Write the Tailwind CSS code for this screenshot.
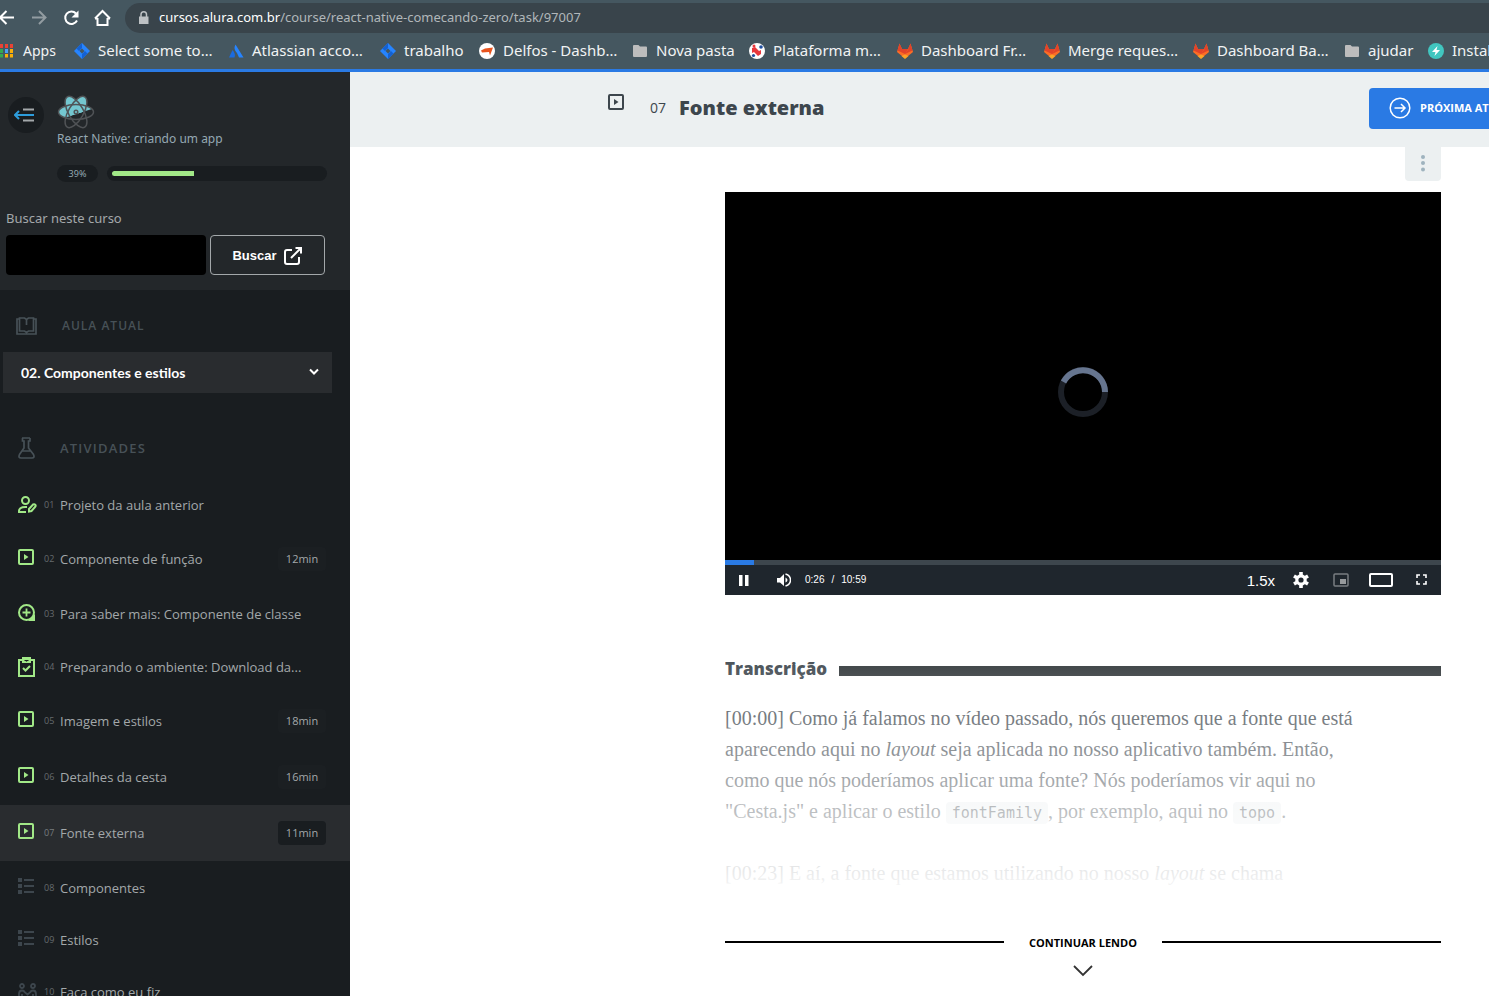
<!DOCTYPE html>
<html lang="pt-BR">
<head>
<meta charset="utf-8">
<title>Fonte externa</title>
<script src="https://cdn.jsdelivr.net/npm/@tailwindcss/browser@4"></script>
</head>
<body class="flex h-screen flex-col overflow-hidden bg-white font-['Open_Sans','Noto_Sans',sans-serif]">
<svg class="hidden">
  <symbol id="play" viewBox="0 0 16 16"><rect x="1" y="1" width="14" height="14" rx="1" fill="none" stroke="currentColor" stroke-width="2"/><path d="M6 5l4.500 3L6 11z" fill="currentColor"/></symbol>
  <symbol id="list" viewBox="0 0 16 16"><path d="M0 0h4v4H0zM0 6h4v4H0zM0 12h4v4H0zM6 1h10v2H6zM6 7h10v2H6zM6 13h10v2H6z" fill="currentColor"/></symbol>
  <symbol id="jira" viewBox="0 0 16 16"><path d="M8 0l8 8-8 8-8-8z" fill="#2684ff"/><path d="M8 0v5L5 8 2.500 5.500zM8 16v-5l3-3 2.500 2.500z" fill="#1461d2"/><path d="M8 5.500L10.500 8 8 10.500 5.500 8z" fill="#455760"/></symbol>
  <symbol id="gitlab" viewBox="0 0 16 16"><path d="M8 15.500L0 9l2.500-8.500L5 6h6l2.500-5.500L16 9z" fill="#fc6d26"/><path d="M2.500.5L5 6l3 5-7.500-3.500zM13.500.5L11 6l-3 5 7.500-3.500zM4.500 6h7L8 11z" fill="#e24329"/><path d="M8 16L4.500 13 8 11.500l3.500 1.500z" fill="#fca326"/></symbol>
  <symbol id="folder" viewBox="0 0 16 16"><path d="M2 2h4.500L8 3.500h6a1 1 0 011 1V13a1 1 0 01-1 1H2a1 1 0 01-1-1V3a1 1 0 011-1z" fill="#bdbdbd"/></symbol>
</svg>

<header class="shrink-0 border-b-[3px] border-[#2a7ae4] bg-[#455760] font-['Noto_Sans',sans-serif] text-[#f1f3f4]">
  <nav class="flex h-9 items-center" aria-label="Navegação">
    <button class="w-8 shrink-0" aria-label="Voltar"><svg class="-ml-1 size-5" viewBox="0 0 20 20" fill="none" stroke="#fff" stroke-width="2"><path d="M18 9.500H4M10.500 3L4 9.500l6.500 6.500"/></svg></button>
    <button class="w-[33px] shrink-0" aria-label="Avançar"><svg class="-ml-1 size-5" viewBox="0 0 20 20" fill="none" stroke="#929ca1" stroke-width="2"><path d="M4 9.500h13M11 3l6.500 6.500-6.500 6.500"/></svg></button>
    <button class="w-[31px] shrink-0" aria-label="Recarregar"><svg class="-ml-1 size-5" viewBox="0 0 20 20" fill="none" stroke="#fff" stroke-width="2"><path d="M16 12.500A6.200 6.200 0 1 1 15 5.500"/><path d="M17.500 2.500v7h-7z" fill="#fff" stroke="none"/></svg></button>
    <button class="w-[29px] shrink-0" aria-label="Início"><svg class="-ml-1 size-5" viewBox="0 0 20 20" fill="none" stroke="#fff" stroke-width="2"><path d="M5.500 10v7h10v-7M3 10.500h2.500M15.500 10.500H18M3 10.500L10.500 3 18 10.500"/></svg></button>
    <div class="flex h-[30px] flex-1 items-center gap-2 rounded-l-full bg-[#39444b] pl-3">
      <svg class="size-3.5" viewBox="0 0 14 14"><path d="M2 5.500h9.500V13H2z" fill="#bdc1c4"/><path d="M4 6V3.500a2.750 2.750 0 015.500 0V6" fill="none" stroke="#bdc1c4" stroke-width="1.500"/></svg>
      <span class="text-[13px] whitespace-nowrap text-[#b1b7ba]"><span class="text-white">cursos.alura.com.br</span>/course/react-native-comecando-zero/task/97007</span>
    </div>
  </nav>
  <nav class="flex h-[33px] items-center overflow-hidden pb-1 text-[15px] whitespace-nowrap" aria-label="Favoritos">
    <a href="#" class="flex w-[74px] shrink-0 items-center gap-[9px]"><svg class="h-4 w-3.5" viewBox="0 0 14 16"><path d="M-1 1h4v4h-4zM5 1h3v4H5zM10 1h3v4h-3z" fill="#ea4335"/><path d="M-1 6h4v4h-4zM-1 11h4v3.500h-4z" fill="#34a853"/><path d="M5 6h3v4H5z" fill="#4aa0f5"/><path d="M10 6h3v4h-3zM5 11h3v3.500H5zM10 11h3v3.500h-3z" fill="#fbaf07"/></svg><span class="text-sm">Apps</span></a>
    <a href="#" class="flex w-[154px] shrink-0 items-center gap-2"><svg class="size-4"><use href="#jira"/></svg>Select some to…</a>
    <a href="#" class="flex w-[152px] shrink-0 items-center gap-2"><svg class="size-4" viewBox="0 0 16 16"><path d="M7.500 1.500Q5 6 9 10l2 4.500h4.500z" fill="#2684ff"/><path d="M4.500 7L1 14.500h5.500Q8 11 4.500 7z" fill="#1b6be0"/></svg>Atlassian acco…</a>
    <a href="#" class="flex w-[99px] shrink-0 items-center gap-2"><svg class="size-4"><use href="#jira"/></svg>trabalho</a>
    <a href="#" class="flex w-[153px] shrink-0 items-center gap-2"><svg class="size-4" viewBox="0 0 16 16"><circle cx="8" cy="8" r="8" fill="#fff"/><path d="M2 7.500l4-2 8-1-3 8L10 9l-7 .5z" fill="#e8541f"/></svg>Delfos - Dashb…</a>
    <a href="#" class="flex w-[117px] shrink-0 items-center gap-2"><svg class="size-4"><use href="#folder"/></svg>Nova pasta</a>
    <a href="#" class="flex w-[148px] shrink-0 items-center gap-2"><svg class="size-4" viewBox="0 0 16 16"><circle cx="8" cy="8" r="8" fill="#fff"/><path d="M3 5l3-1 4 4 2-1v4l-3 2-4-4-2 1z" fill="#e8383d"/><circle cx="5" cy="3" r="1.500" fill="#e8383d"/><circle cx="12" cy="4" r="1.800" fill="#1f4fa0"/><circle cx="4.500" cy="12.500" r="1.600" fill="#1f4fa0"/></svg>Plataforma m…</a>
    <a href="#" class="flex w-[147px] shrink-0 items-center gap-2"><svg class="size-4"><use href="#gitlab"/></svg>Dashboard Fr…</a>
    <a href="#" class="flex w-[149px] shrink-0 items-center gap-2"><svg class="size-4"><use href="#gitlab"/></svg>Merge reques…</a>
    <a href="#" class="flex w-[151px] shrink-0 items-center gap-2"><svg class="size-4"><use href="#gitlab"/></svg>Dashboard Ba…</a>
    <a href="#" class="flex w-[84px] shrink-0 items-center gap-2"><svg class="size-4"><use href="#folder"/></svg>ajudar</a>
    <a href="#" class="flex shrink-0 items-center gap-2"><svg class="size-4" viewBox="0 0 16 16"><circle cx="8" cy="8" r="8" fill="#41c6c0"/><path d="M9.500 3L4 9h3.500L6.500 13 12 7H8.500z" fill="#fff"/></svg>Instal</a>
  </nav>
</header>

<div class="flex min-h-0 flex-1">
  <aside class="w-[350px] shrink-0 overflow-hidden bg-[#191d20] text-[#a3a8aa]">
    <section class="h-[218px] bg-[#23272a] pt-[23px] pl-1.5">
      <div class="flex items-start">
        <button class="mt-0.5 ml-0.5 flex size-9 items-center justify-center rounded-full bg-[#191d20] pr-1" aria-label="Recolher menu"><svg class="h-4 w-5" viewBox="0 0 20 16" fill="none"><path d="M9 2.500h11M9 13.500h11" stroke="#a3a8aa" stroke-width="2"/><path d="M1 8h19M5 4L1 8l4 4" stroke="#2d9cdb" stroke-width="2"/></svg></button>
        <div class="ml-[13px] font-['Noto_Sans',sans-serif]">
          <svg class="h-[34px] w-[38px]" viewBox="0 0 38 34"><defs><clipPath id="lit"><path d="M0 0h38v13L0 25z"/></clipPath></defs>
            <g clip-path="url(#lit)" fill="#74c7d0"><ellipse cx="19" cy="17" rx="17.500" ry="7.500"/><ellipse cx="19" cy="17" rx="17.500" ry="7.500" transform="rotate(60 19 17)"/><ellipse cx="19" cy="17" rx="17.500" ry="7.500" transform="rotate(120 19 17)"/></g>
            <g fill="none" stroke="#505356" stroke-width="1.500"><ellipse cx="19" cy="17" rx="17.500" ry="7.500"/><ellipse cx="19" cy="17" rx="17.500" ry="7.500" transform="rotate(60 19 17)"/><ellipse cx="19" cy="17" rx="17.500" ry="7.500" transform="rotate(120 19 17)"/><circle cx="19" cy="17" r="1.800"/></g></svg>
          <p class="text-xs leading-5 text-[#95a9b3]">React Native: criando um app</p>
        </div>
      </div>
      <div class="mt-4 ml-[51px] flex items-center gap-[9px]">
        <span class="flex h-[17px] w-[41px] items-center justify-center rounded-full bg-[#191d20] font-['Noto_Sans',sans-serif] text-[9px] text-[#95a9b3]">39%</span>
        <div class="flex h-[15px] w-[220px] items-center rounded-full bg-[#191d20] px-[5px]" role="progressbar" aria-label="Progresso" aria-valuenow="39" aria-valuemin="0" aria-valuemax="100"><div class="h-[5px] rounded-l-full bg-[#a1e887]" style="width:39%"></div></div>
      </div>
      <form class="mt-[26px]" onsubmit="return false">
        <label for="q" class="block font-['Noto_Sans',sans-serif] text-[13px] leading-5">Buscar neste curso</label>
        <div class="mt-[7px] flex gap-1">
          <input id="q" type="text" class="h-10 w-[200px] rounded bg-black px-2 text-white">
          <button class="flex h-10 w-[115px] items-center justify-center gap-1.5 rounded border border-[#a3a8aa] pt-0.5 font-['Liberation_Sans',sans-serif] text-[13px] font-bold text-white">Buscar<svg class="size-5" viewBox="0 0 20 20" fill="none" stroke="#fff" stroke-width="2"><path d="M9 4H4Q2 4 2 6v10q0 2 2 2h10q2 0 2-2v-5M8 12L18 2M12.500 2H18v5.500"/></svg></button>
        </div>
      </form>
    </section>

    <h2 class="mt-[26px] flex items-center gap-[25px] pl-4 text-xs leading-5 tracking-[1px] text-[#475157]"><svg class="h-[18px] w-[21px]" viewBox="0 0 21 18" fill="none" stroke="#475157" stroke-width="1.700"><path d="M3 2H1v15h19V2h-2M3.500 1v13h5l2 1.500 2-1.500h5V1h-5l-2 1.500L8.500 1zM10.500 2.500V8"/></svg><span class="font-semibold">AULA ATUAL</span></h2>
    <div class="relative mt-4 ml-[3px] w-[329px] bg-[#292c2f]">
      <select aria-label="Aula atual" class="h-[41px] w-full appearance-none bg-transparent pl-[18px] font-['Lato',sans-serif] text-sm font-bold text-white"><option>02. Componentes e estilos</option></select>
      <svg class="pointer-events-none absolute top-4 right-[13px] h-2 w-2.5" viewBox="0 0 10 8"><path d="M1 1.500l4 4 4-4" fill="none" stroke="#fff" stroke-width="2"/></svg>
    </div>
    <h2 class="mt-[44px] flex items-center gap-[25px] pl-[18px] text-xs leading-5 tracking-[1.2px] text-[#475157]"><svg class="h-[22px] w-[17px]" viewBox="0 0 17 22" fill="none" stroke="#475157" stroke-width="1.700"><path d="M4 1h8M4.500 1v3h1.500v7L1.500 17.500Q0 21 3 21h11q3 0 1.500-3.500L10.500 11V4H12V1M4 14h9"/></svg><span class="text-[13px] font-semibold">ATIVIDADES</span></h2>

    <ol class="mt-[19px] text-[13px] leading-5">
      <li><a href="#" class="flex h-[53px] items-center pl-[18px]"><svg class="h-[17px] w-[19px] text-[#a1e887]" viewBox="0 0 19 17" fill="none" stroke="currentColor" stroke-width="2"><circle cx="7.500" cy="4.500" r="3.500"/><path d="M8 16H1q-.5-5 6.500-5h1.500M11 15.500v-2.500l4-4.500q1.500-.8 2.500.5.500 1-.5 2L13.500 15z"/></svg><span class="ml-[7px] w-4 text-[9px] text-[#666b6e]">01</span>Projeto da aula anterior</a></li>
      <li><a href="#" class="flex h-14 items-center pl-[18px]"><svg class="mb-1 mr-[3px] size-4 text-[#a1e887]"><use href="#play"/></svg><span class="ml-[7px] w-4 text-[9px] text-[#666b6e]">02</span>Componente de função<span class="mr-6 ml-auto flex h-6 w-12 items-center justify-center rounded-sm bg-[#1b1f22] text-[11px]">12min</span></a></li>
      <li><a href="#" class="flex h-[53px] items-center pl-[18px]"><svg class="mr-0.5 mb-[3px] size-[17px] text-[#a1e887]" viewBox="0 0 17 17" fill="none" stroke="currentColor"><circle cx="8.500" cy="8.500" r="7.500" stroke-width="2"/><path d="M8.500 4.500v8M4.500 8.500h8" stroke-width="1.800"/><path d="M17 10v7h-7z" fill="currentColor" stroke="none"/></svg><span class="ml-[7px] w-4 text-[9px] text-[#666b6e]">03</span>Para saber mais: Componente de classe</a></li>
      <li><a href="#" class="flex h-[53px] items-center pl-[18px]"><svg class="mr-0.5 h-5 w-[17px] text-[#a1e887]" viewBox="0 0 17 20" fill="none" stroke="currentColor" stroke-width="2"><path d="M1 3h15v16H1zM5 11l2.500 2.500L12 9"/><path d="M4 0h9v6H4z" fill="currentColor" stroke="none"/><path d="M6.500 3.500h1.500l.5.500.5-.500h1.500" stroke="#191d20" stroke-width="1.200"/></svg><span class="ml-[7px] w-4 text-[9px] text-[#666b6e]">04</span>Preparando o ambiente: Download da...</a></li>
      <li><a href="#" class="flex h-14 items-center pl-[18px]"><svg class="mb-1 mr-[3px] size-4 text-[#a1e887]"><use href="#play"/></svg><span class="ml-[7px] w-4 text-[9px] text-[#666b6e]">05</span>Imagem e estilos<span class="mr-6 ml-auto flex h-6 w-12 items-center justify-center rounded-sm bg-[#1b1f22] text-[11px]">18min</span></a></li>
      <li><a href="#" class="flex h-14 items-center pl-[18px]"><svg class="mb-1 mr-[3px] size-4 text-[#a1e887]"><use href="#play"/></svg><span class="ml-[7px] w-4 text-[9px] text-[#666b6e]">06</span>Detalhes da cesta<span class="mr-6 ml-auto flex h-6 w-12 items-center justify-center rounded-sm bg-[#1b1f22] text-[11px]">16min</span></a></li>
      <li><a href="#" aria-current="page" class="flex h-14 items-center bg-[#292c2f] pl-[18px]"><svg class="mb-1 mr-[3px] size-4 text-[#a1e887]"><use href="#play"/></svg><span class="ml-[7px] w-4 text-[9px] text-[#777c7f]">07</span>Fonte externa<span class="mr-6 ml-auto flex h-6 w-12 items-center justify-center rounded-sm bg-[#191d20] text-[11px]">11min</span></a></li>
      <li><a href="#" class="flex h-[53px] items-center pl-[18px]"><svg class="mb-1 mr-[3px] size-4 text-[#3d464d]"><use href="#list"/></svg><span class="ml-[7px] w-4 text-[9px] text-[#666b6e]">08</span>Componentes</a></li>
      <li><a href="#" class="flex h-[52px] items-center pl-[18px]"><svg class="mb-1 mr-[3px] size-4 text-[#3d464d]"><use href="#list"/></svg><span class="ml-[7px] w-4 text-[9px] text-[#666b6e]">09</span>Estilos</a></li>
      <li><a href="#" class="flex h-[52px] items-center pl-[18px]"><svg class="h-[19px] w-[19px] text-[#3d464d]" viewBox="0 0 19 19" fill="none" stroke="currentColor" stroke-width="1.800"><circle cx="4" cy="3" r="2"/><circle cx="15" cy="3" r="2"/><path d="M1 18v-7q0-3.500 3-3.500 2 0 3 2l2.500 2 2.500-2q1-2 3-2 3 0 3 3.500v7M4 11v7M15 11v7"/></svg><span class="ml-[7px] w-4 text-[9px] text-[#666b6e]">10</span>Faça como eu fiz</a></li>
    </ol>
  </aside>

  <main class="min-w-0 flex-1 overflow-hidden text-[#3d464d]">
    <header class="flex h-[75px] items-center bg-[#ecf0f1] pb-[3px] pl-[258px]">
      <svg class="mb-3 size-4 shrink-0"><use href="#play"/></svg>
      <h1 class="ml-[26px] flex items-center whitespace-nowrap"><span class="mr-[13px] text-sm">07</span><span class="text-xl font-extrabold">Fonte externa</span></h1>
      <button class="-mr-12 ml-auto flex h-[41px] w-[168px] shrink-0 items-center gap-[9px] rounded bg-[#2a7ae4] pl-5 text-[11px] font-bold whitespace-nowrap text-white"><svg class="size-[22px] shrink-0" viewBox="0 0 22 22" fill="none" stroke="#fff" stroke-width="1.500"><circle cx="11" cy="11" r="9.800"/><path d="M5.500 11h10.500M12 7l4 4-4 4"/></svg>PRÓXIMA ATIVIDADE</button>
    </header>
    <div class="flex flex-col pr-12 pl-[375px]">
      <button class="flex h-[34px] w-9 items-center justify-center self-end rounded-b-sm bg-[#ecf0f1] pb-0.5" aria-label="Mais opções"><svg class="h-[18px] w-1" viewBox="0 0 4 18" fill="#9fb3be"><circle cx="2" cy="3" r="2"/><circle cx="2" cy="9" r="2"/><circle cx="2" cy="15.500" r="2"/></svg></button>

      <section class="mt-[11px] flex flex-col bg-black" aria-label="Vídeo">
        <div class="flex h-[368px] items-center justify-center pt-8"><svg class="size-[50px]" viewBox="0 0 50 50" fill="none" stroke-width="6"><circle cx="25" cy="25" r="22" stroke="#1c2027"/><path d="M5.500 15A22 22 0 0147 25" stroke="#66758f"/></svg></div>
        <div class="h-[5px] bg-[#3d464d]"><div class="h-full bg-[#2a7ae4]" style="width:4%"></div></div>
        <div class="flex h-[30px] items-center bg-[#1f262d] pb-px font-['Liberation_Sans',sans-serif] text-[10px] text-white">
          <button class="flex w-[38px] justify-center" aria-label="Pausar"><svg class="h-3 w-2.5" viewBox="0 0 10 12" fill="#fff"><path d="M0 1h3.500v11H0zM6 1h3.500v11H6z"/></svg></button>
          <button class="flex w-[42px] justify-center" aria-label="Volume"><svg class="size-3.5" viewBox="0 0 14 14" fill="#fff"><path d="M0 5v4.500h3L7 13V1L3 5zM8.500 4.500v5q2-1 2-2.500t-2-2.500z"/><path d="M8.500 1q5 1.500 5 6t-5 6" fill="none" stroke="#fff" stroke-width="1.500"/></svg></button>
          <span class="flex gap-[7px]"><span>0:26</span><span>/</span><span>10:59</span></span>
          <button class="ml-auto pt-1 pr-1.5 text-[15px]">1.5x</button>
          <button class="flex w-10 justify-center" aria-label="Configurações"><svg class="size-4" viewBox="0 0 16 16"><circle cx="8" cy="8" r="4.200" fill="none" stroke="#fff" stroke-width="3.200"/><path d="M8 0v3M8 13v3M1 4l2.600 1.500M12.400 10.500L15 12M1 12l2.600-1.500M12.400 5.500L15 4" stroke="#fff" stroke-width="3.600"/></svg></button>
          <button class="flex w-10 justify-center" aria-label="Miniatura"><svg class="h-3.5 w-4" viewBox="0 0 16 14"><rect x="1" y="1" width="14" height="12" rx="1" fill="none" stroke="#797d81" stroke-width="1.500"/><path d="M7 6h6v5H7z" fill="#979a9d"/></svg></button>
          <button class="flex w-10 justify-center" aria-label="Modo teatro"><svg class="h-3.5 w-6" viewBox="0 0 24 14"><rect x="1" y="1" width="22" height="12" rx="1" fill="none" stroke="#fff" stroke-width="2"/></svg></button>
          <button class="flex w-10 justify-center" aria-label="Tela cheia"><svg class="size-[11px]" viewBox="0 0 11 11" fill="none" stroke="#fff" stroke-width="1.600"><path d="M1 4V1h3M7 1h3v3M10 7v3H7M4 10H1V7"/></svg></button>
        </div>
      </section>

      <section class="relative mt-[60px] h-[246px] overflow-hidden">
        <h2 class="flex items-center gap-3 text-[17px] leading-7 font-extrabold">Transcrição<span class="mt-1 h-2.5 flex-1 bg-[#303639]"></span></h2>
        <div class="mt-5 space-y-[29px] font-['Liberation_Serif',serif] text-xl leading-[31px] whitespace-nowrap">
          <p>[00:00] Como já falamos no vídeo passado, nós queremos que a fonte que está<br>aparecendo aqui no <em>layout</em> seja aplicada no nosso aplicativo também. Então,<br>como que nós poderíamos aplicar uma fonte? Nós poderíamos vir aqui no<br>"Cesta.js" e aplicar o estilo <code class="rounded-sm bg-[#ecf0f1] px-1.5 py-0.5 font-['DejaVu_Sans_Mono',monospace] text-[15px]">fontFamily</code>, por exemplo, aqui no <code class="rounded-sm bg-[#ecf0f1] px-1.5 py-0.5 font-['DejaVu_Sans_Mono',monospace] text-[15px]">topo</code>.</p>
          <p>[00:23] E aí, a fonte que estamos utilizando no nosso <em>layout</em> se chama</p>
        </div>
        <div class="pointer-events-none absolute inset-0 bg-linear-to-b from-white/5 to-white"></div>
      </section>

      <button class="mt-8 flex flex-col items-center text-[11px] leading-5 font-bold text-black">
        <span class="flex w-full items-center gap-[25px]"><span class="mb-0.5 h-0.5 flex-1 bg-black"></span>CONTINUAR LENDO<span class="mb-0.5 h-0.5 flex-1 bg-black"></span></span>
        <svg class="mt-3 h-3 w-5" viewBox="0 0 20 12"><path d="M1 1l9 9 9-9" fill="none" stroke="#333" stroke-width="1.800"/></svg>
      </button>
    </div>
  </main>
</div>
</body>
</html>
